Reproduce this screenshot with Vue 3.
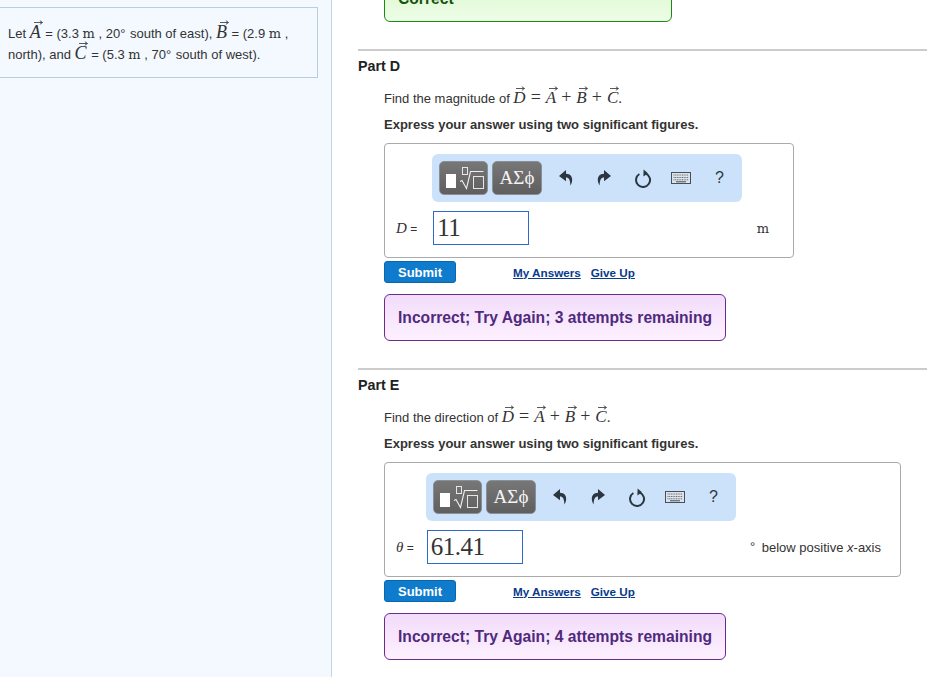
<script setup>
const parts = [
  { id: 'd', title: 'Part D', prompt: 'Find the magnitude of', label: 'D', value: '11', attempts: 3 },
  { id: 'e', title: 'Part E', prompt: 'Find the direction of', label: 'θ', value: '61.41', attempts: 4 }
]
</script>

<template>
  <div class="page">
    <aside class="side">
      <div class="problem">
        Let <span class="vec">A<svg viewBox="0 0 10 5"><path d="M0 2.5H9M6.5 .5 9.5 2.5 6.5 4.5" /></svg></span> = (3.3 <span class="unit-m">m</span> , 20<span class="deg">°</span> south of east), <span class="vec">B<svg viewBox="0 0 10 5"><path d="M0 2.5H9M6.5 .5 9.5 2.5 6.5 4.5" /></svg></span> = (2.9 <span class="unit-m">m</span> ,<br />
        north), and <span class="vec">C<svg viewBox="0 0 10 5"><path d="M0 2.5H9M6.5 .5 9.5 2.5 6.5 4.5" /></svg></span> = (5.3 <span class="unit-m">m</span> , 70<span class="deg">°</span> south of west).
      </div>
    </aside>

    <main class="main">
      <div class="msg correct">Correct</div>

      <section v-for="p in parts" :key="p.id" class="part" :class="'part-' + p.id">
        <h2 class="title">{{ p.title }}</h2>
        <div class="body">
          <p class="prompt">
            {{ p.prompt }}
            <span class="eq">
              <span class="vec">D<svg viewBox="0 0 10 5"><path d="M0 2.5H9M6.5 .5 9.5 2.5 6.5 4.5" /></svg></span><span class="op">=</span><span class="vec">A<svg viewBox="0 0 10 5"><path d="M0 2.5H9M6.5 .5 9.5 2.5 6.5 4.5" /></svg></span><span class="op">+</span><span class="vec">B<svg viewBox="0 0 10 5"><path d="M0 2.5H9M6.5 .5 9.5 2.5 6.5 4.5" /></svg></span><span class="op">+</span><span class="vec">C<svg viewBox="0 0 10 5"><path d="M0 2.5H9M6.5 .5 9.5 2.5 6.5 4.5" /></svg></span><span class="dot">.</span>
            </span>
          </p>
          <p class="hint">Express your answer using two significant figures.</p>

          <div class="answer">
            <div class="toolbar">
              <button class="tool-btn first-btn" type="button" aria-label="Templates">
                <svg width="47" height="32" viewBox="0 0 47 32">
                  <rect x="6" y="12" width="10" height="14" fill="#fff" />
                  <rect x="22.5" y="5.5" width="5" height="7" fill="none" stroke="#e6e6e6" />
                  <path d="M20 19.5 22 18.5 26.5 26.5 30.5 9.5H43.5" fill="none" stroke="#eee" stroke-width="1.1" />
                  <rect x="33.5" y="14.5" width="10" height="12" fill="none" stroke="#e6e6e6" />
                </svg>
              </button>
              <button class="tool-btn greek" type="button">ΑΣϕ</button>
              <span class="tools">
                <svg class="ico" width="14" height="16" viewBox="0 0 14 16"><path d="M7 0 0 6 7 11.2V7.6C10 7.6 11 9.6 11.5 15.6 14.6 10 13.6 4 7 3.8Z" fill="#2b3640" /></svg>
                <svg class="ico" width="14" height="16" viewBox="0 0 14 16"><path d="M7 0 14 6 7 11.2V7.6C4 7.6 3 9.6 2.5 15.6-.6 10 .4 4 7 3.8Z" fill="#2b3640" /></svg>
                <svg class="ico" width="18" height="19" viewBox="0 0 18 19"><path d="M5.4 5A7 7 0 1 0 11.4 4.4" fill="none" stroke="#2b3640" stroke-width="2" /><path d="M9.6 .6 14 4.2 9.4 7.6Z" fill="#2b3640" /></svg>
                <svg class="ico" width="20" height="12" viewBox="0 0 20 12"><rect x=".5" y=".5" width="19" height="11" fill="#dde3e8" stroke="#44505a" /><path d="M2.5 3H17.5M2.5 5.5H17.5M2.5 7.8H17.5" stroke="#5f6972" stroke-dasharray="1 .7" /><path d="M5 9.8H15" stroke="#44505a" /></svg>
                <span class="help">?</span>
              </span>
            </div>
            <div class="row">
              <span class="label"><i>{{ p.label }}</i> =</span>
              <div class="field">{{ p.value }}</div>
              <span v-if="p.id === 'd'" class="unit unit-m">m</span>
              <span v-else class="unit"><span class="deg gap">°</span> below positive <i>x</i>-axis</span>
            </div>
          </div>

          <div class="actions">
            <button class="submit" type="button">Submit</button>
            <a class="link first" href="#">My Answers</a>
            <a class="link" href="#">Give Up</a>
          </div>

          <div class="msg incorrect">Incorrect; Try Again; {{ p.attempts }} attempts remaining</div>
        </div>
      </section>
    </main>
  </div>
</template>

<style>
html, body { margin: 0; background: #fff; overflow: hidden; }
</style>

<style scoped>
.page {
  display: flex;
  height: 100vh;
  overflow: hidden;
  font-family: "Liberation Sans", Arial, sans-serif;
  font-size: 13px;
  color: #333;
}
.side {
  flex: 0 0 332px;
  box-sizing: border-box;
  background: #f4f9ff;
  border-right: 1px solid #c5d5e4;
  padding-top: 7px;
}
.problem {
  box-sizing: border-box;
  width: 318px;
  height: 71px;
  padding: 15px 0 0 8px;
  border: 1px solid #b9cde0;
  border-left: 0;
  line-height: 21px;
}
.problem .vec { font-size: 18px; line-height: 14px; margin-right: 1px; }
.problem .vec svg { top: -5px; left: 4px; }
.problem .deg { margin-right: 1px; }
.deg { font-size: 13px; }
.deg.gap { margin-right: 3px; position: relative; top: -1px; }
.unit-m { font-family: "DejaVu Serif", "Liberation Serif", serif; font-size: 13px; }
.vec {
  position: relative;
  display: inline-block;
  font-family: "Liberation Serif", serif;
  font-style: italic;
  font-size: 17px;
  line-height: 1;
}
.vec svg {
  position: absolute;
  left: 3px;
  top: -3px;
  width: 9px;
  height: 5px;
  fill: none;
  stroke: #333;
  stroke-width: .9;
}
.main { flex: 1; min-width: 0; padding-left: 26px; }
.msg {
  box-sizing: border-box;
  height: 47px;
  line-height: 45px;
  padding-left: 13px;
  border-radius: 6px;
  font-size: 15.65px;
  font-weight: 700;
}
.correct {
  width: 288px;
  margin: -25px 0 27px 26px;
  border: 1px solid #1b8a12;
  color: #17530f;
  background: linear-gradient(#d8f7c8, #eefde8);
}
.incorrect {
  width: 342px;
  margin-top: 11px;
  border: 1px solid #6a2a8e;
  color: #4f2a7c;
  background: linear-gradient(#f2dcfa, #fdf0ff);
}
.part { border-top: 2px solid #ccc; padding-bottom: 27px; }
.title { margin: 7px 0 0; font-size: 14.3px; line-height: 16px; font-weight: 700; color: #222; }
.body { padding-left: 26px; }
.prompt { margin: 13px 0 0; height: 20px; line-height: 20px; white-space: nowrap; }
.eq { font-family: "Liberation Serif", serif; font-size: 17px; }
.op { margin: 0 5px; font-size: 18px; }
.dot { font-size: 15px; }
.hint { margin: 10px 0 0; line-height: 16px; font-weight: 700; }
.answer {
  box-sizing: border-box;
  margin-top: 10px;
  padding: 10px 0 12px 11px;
  border: 1px solid #aaa;
  border-radius: 4px;
}
.part-d .answer { width: 410px; padding-right: 24px; }
.part-e .answer { width: 517px; padding-right: 19px; }
.part-d .toolbar { margin-left: 36px; }
.part-e .toolbar { margin-left: 30px; }
.part-d .label { margin-right: 16px; }
.toolbar {
  box-sizing: border-box;
  display: flex;
  align-items: center;
  gap: 4px;
  width: 310px;
  height: 48px;
  padding: 0 0 0 7px;
  background: #cce2fb;
  border-radius: 6px;
}
.tool-btn {
  flex: none;
  box-sizing: border-box;
  width: 50px;
  height: 34px;
  padding: 0;
  display: flex;
  align-items: center;
  justify-content: center;
  border: 1px solid #8a8f94;
  border-radius: 5px;
  background: linear-gradient(#777, #5f5f5f);
  color: #f4f4f4;
}
.first-btn { width: 49px; }
.greek { font-family: "Liberation Serif", serif; font-size: 19px; }
.tools {
  display: grid;
  grid-template-columns: repeat(5, 38.3px);
  justify-items: center;
  align-items: center;
  margin-left: 1px;
}
.help { font-size: 16px; color: #2b3640; }
.row { display: flex; align-items: center; margin-top: 9px; }
.label { margin-right: 13px; font-size: 12px; }
.label i { font-family: "Liberation Serif", serif; font-size: 15px; }
.field {
  box-sizing: border-box;
  width: 96px;
  height: 34px;
  padding-left: 3px;
  border: 1px solid #2f69c9;
  font-family: "Liberation Serif", serif;
  font-size: 25px;
  letter-spacing: -.5px;
  line-height: 32px;
  color: #333;
}
.unit { margin-left: auto; }
.actions { display: flex; align-items: center; margin-top: 3px; height: 22px; }
.submit {
  box-sizing: border-box;
  width: 72px;
  height: 22px;
  padding: 0;
  border: 1px solid #0b66ad;
  border-radius: 3px;
  background: #0f7bcd;
  color: #fff;
  font-family: "Liberation Sans", Arial, sans-serif;
  font-size: 13px;
  font-weight: 700;
}
.link { color: #0a3a8c; font-size: 11.7px; font-weight: 700; margin-left: 10px; }
.link.first { margin-left: 57px; }
</style>
